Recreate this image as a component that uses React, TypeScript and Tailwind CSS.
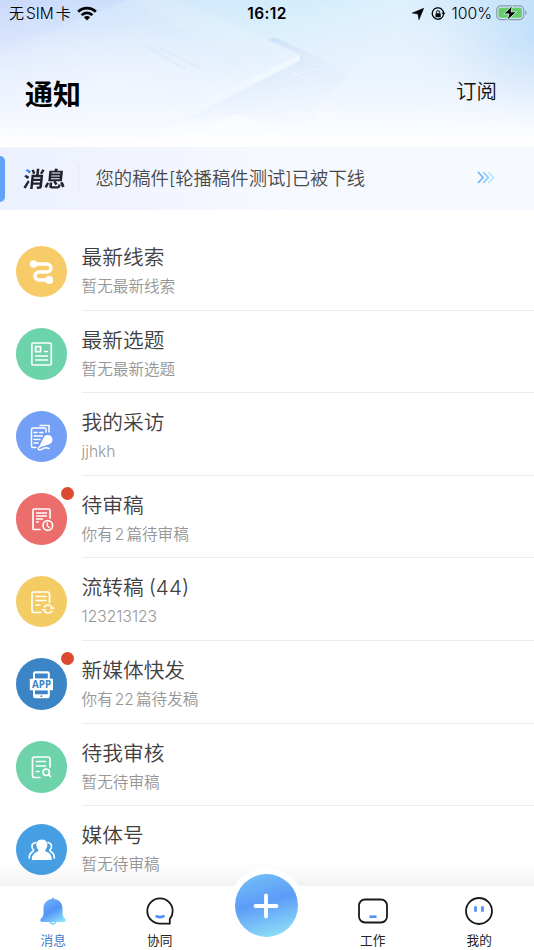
import React from 'react';

interface Item {
  id: number;
  title: React.ReactNode;
  subtitle: React.ReactNode;
  color: string;
  icon: React.ReactNode;
  unread?: boolean;
}

const stroke = {
  fill: 'none',
  stroke: 'white',
  strokeWidth: 1.7,
  strokeLinecap: 'round' as const,
  strokeLinejoin: 'round' as const,
};

const items: Item[] = [
  {
    id: 1,
    title: '最新线索',
    subtitle: '暂无最新线索',
    color: 'bg-[#f6cb68]',
    icon: (
      <>
        <path d="M18 18H31a4 4 0 0 1 0 8H23a4 4 0 0 0 0 8H33" fill="none" stroke="white" strokeWidth="3.5" />
        <circle cx="17.5" cy="18" r="3.8" fill="white" />
        <circle cx="33.2" cy="34" r="4" fill="white" />
      </>
    ),
  },
  {
    id: 2,
    title: '最新选题',
    subtitle: '暂无最新选题',
    color: 'bg-[#6dd3ab]',
    icon: (
      <g {...stroke}>
        <rect x="15.8" y="15" width="19.5" height="22" rx="1.5" />
        <rect x="19.6" y="18.7" width="5" height="5" />
        <path d="M28.500 23.500H31.500M19.800 28H31.500M19.800 32H31.500" />
      </g>
    ),
  },
  {
    id: 3,
    title: '我的采访',
    subtitle: 'jjhkh',
    color: 'bg-[#749ff7]',
    icon: (
      <g {...stroke} strokeWidth="1.500">
        <path d="M24 14.500H33V21M30 21V18.500a1.500 1.500 0 0 0-1.500-1.500H17a1.500 1.500 0 0 0-1.500 1.500V35a1.500 1.500 0 0 0 1.500 1.500H20" />
        <path d="M18 21.500H21M23.500 21.500H27M18 25H26.500M18 28.500H24M18 32H22" strokeWidth="1.300" />
        <path d="M28 27.500a4 4 0 1 1 5 5L24 35.500z" fill="white" />
        <path d="M24 35.500c-3 2-2 4 1 3 4-1.500 4-3 8-1" />
      </g>
    ),
  },
  {
    id: 4,
    title: '待审稿',
    subtitle: <>你有<span className="mx-[2px]">2</span>篇待审稿</>,
    color: 'bg-[#eb6d6c]',
    unread: true,
    icon: (
      <g {...stroke}>
        <path d="M24 36.500H18a1 1 0 0 1-1-1V17a1 1 0 0 1 1-1H33a1 1 0 0 1 1 1V25" />
        <path d="M20.500 20H30.500M20.500 23H30.500M20.500 26H26.500M20.500 29H22.500" strokeWidth="1.400" />
        <circle cx="31.800" cy="32.500" r="4.800" />
        <path d="M31.300 29.800V32.800L33.100 34.500" strokeWidth="1.300" />
      </g>
    ),
  },
  {
    id: 5,
    title: <>流转稿<span className="ml-[5px]">(44)</span></>,
    subtitle: '123213123',
    color: 'bg-[#f4cc64]',
    icon: (
      <g {...stroke}>
        <path d="M25 36.500H18a2 2 0 0 1-2-2V18a2 2 0 0 1 2-2H31.500a2 2 0 0 1 2 2V26.500" />
        <path d="M20 20.500H30M20 24.500H30M20 29H24" strokeWidth="1.300" />
        <path d="M28.200 31.200a4.500 4.500 0 0 1 8.200 1M36 34.800a4.500 4.500 0 0 1-8.200-1M35 32.300h2.800M26.500 33.600h2.800" strokeWidth="1.400" />
      </g>
    ),
  },
  {
    id: 6,
    title: '新媒体快发',
    subtitle: <>你有<span className="mx-[2px]">22</span>篇待发稿</>,
    color: 'bg-[#3b85c7]',
    unread: true,
    icon: (
      <>
        <path
          d="M17 21V15.500a2.200 2.200 0 0 1 2.200-2.200H31.600a2.200 2.200 0 0 1 2.200 2.200V21ZM19 15.600V20.500H31.800V15.600Z"
          fill="white"
          fillRule="evenodd"
        />
        <rect x="13.800" y="20.700" width="23.200" height="11.500" rx="0.500" fill="white" />
        <path
          d="M17 32V38a2.200 2.200 0 0 0 2.200 2.200H31.600a2.200 2.200 0 0 0 2.200-2.200V32ZM19 32.200H31.800V36.200H19ZM24.500 38.200a.9.9 0 1 0 1.800 0 .9.9 0 1 0-1.800 0"
          fill="white"
          fillRule="evenodd"
        />
        <text x="25.600" y="29.900" textAnchor="middle" fill="#3b85c7" fontSize="9.800" fontWeight="700" fontFamily="Open Sans, sans-serif">
          APP
        </text>
      </>
    ),
  },
  {
    id: 7,
    title: '待我审核',
    subtitle: '暂无待审稿',
    color: 'bg-[#6ed2aa]',
    icon: (
      <g {...stroke}>
        <path d="M24 36.500H18.500a2 2 0 0 1-2-2V18a2 2 0 0 1 2-2H32a2 2 0 0 1 2 2V26" />
        <path d="M20.500 20.500H29.500M20.500 25H29.500M20.500 30.500H23" />
        <circle cx="30.200" cy="31.300" r="3.200" />
        <path d="M32.800 33.800L34.500 35.500" />
      </g>
    ),
  },
  {
    id: 8,
    title: '媒体号',
    subtitle: '暂无待审稿',
    color: 'bg-[#469fe3]',
    icon: (
      <>
        <g {...stroke}>
          <path d="M19.500 18.500c-4 .5-4.500 5-2 7.500.5 1-.5 1.500-1.500 2C14 29.200 13.200 31 13.200 34" />
          <path d="M32 18.500c4 .5 4.500 5 2 7.500-.5 1 .5 1.500 1.500 2C37.500 29.200 38.300 31 38.300 34" />
        </g>
        <path
          d="M25.800 15.500c-4 0-6 3-5.500 6 .3 2 1 3.200 2 4.500.3 1-.5 1.500-1.500 2-3.500 1.500-5 3.500-5 8H35.800c0-4.500-1.500-6.500-5-8-1-.5-1.800-1-1.500-2 1-1.300 1.700-2.500 2-4.500.5-3-1.500-6-5.500-6z"
          fill="white"
        />
      </>
    ),
  },
];

function StatusBar() {
  return (
    <div className="flex h-7 items-center justify-between pr-[7px] pl-[9px] text-[16px] leading-7 text-black">
      <div className="flex w-[200px] items-center font-[350]">
        <span className="text-[15px]">无</span>
        <span className="mx-[2px] text-[15.500px]">SIM</span>
        <span className="text-[15px]">卡</span>
        <svg className="-mt-[2px] ml-[6px]" width="20" height="15" viewBox="0 0 20 15">
          <g fill="none" stroke="black" strokeWidth="2.700">
            <path d="M1.200 5.700a12.400 12.400 0 0 1 17.600 0" />
            <path d="M4.600 9.100a7.600 7.600 0 0 1 10.800 0" />
          </g>
          <path d="M10 14.500L6.900 11.300a4.400 4.400 0 0 1 6.200 0z" fill="black" />
        </svg>
      </div>
      <span className="-ml-[3px] text-[15.500px] font-semibold tracking-[0.400px]">16:12</span>
      <div className="-mr-px flex w-[200px] items-center justify-end">
        <svg width="12" height="12" viewBox="0 0 13 13">
          <path d="M12.700.300L7.500 12.700 6.500 6.500.300 5.500z" fill="black" stroke="black" strokeWidth=".6" strokeLinejoin="round" />
        </svg>
        <svg className="ml-[7px]" width="15" height="14" viewBox="0 0 15 14">
          <path d="M10.500 2A5.700 5.700 0 1 0 12.600 7.500M10.300 1.900A5.700 5.700 0 0 1 12.500 6" fill="none" stroke="black" strokeWidth="1.300" />
          <path d="M10.500 5.700h4L12.500 8.300z" />
          <rect x="4.500" y="6.300" width="5.200" height="3.900" rx=".6" />
          <path d="M5.500 6.500V5.300a1.600 1.600 0 0 1 3.200 0V6.500" fill="none" stroke="black" />
        </svg>
        <span className="mr-[4px] ml-[5px] text-[15.800px] font-[350]">100%</span>
        <svg className="-mt-[2px]" width="32" height="16" viewBox="0 0 32 16">
          <rect x=".7" y=".9" width="27" height="13.700" rx="4" fill="none" stroke="#8b9da7" strokeWidth="1.200" />
          <rect x="2.500" y="2.700" width="23.400" height="10.100" rx="2.300" fill="#65cc68" />
          <path d="M29.300 5.500c2 .8 2 3.700 0 4.500z" fill="#8b9da7" />
          <path d="M16.500.5L7.700 8.900H13L11 15.500 20.500 6.800H15z" fill="black" stroke="#d9f0ed" strokeWidth=".9" />
        </svg>
      </div>
    </div>
  );
}

function HeaderBackdrop() {
  return (
    <svg className="absolute inset-0 -z-10" width="534" height="147" viewBox="0 0 534 147">
      <defs>
        <linearGradient id="sky" x1="0" y1="0" x2="1" y2="0">
          <stop offset="0" stopColor="#cddefc" />
          <stop offset=".25" stopColor="#d2e6fc" />
          <stop offset=".5" stopColor="#d1ecfb" />
          <stop offset=".75" stopColor="#dcf0fd" />
          <stop offset="1" stopColor="#c8e2fa" />
        </linearGradient>
        <linearGradient id="fade" x1="0" y1="0" x2="0" y2="1">
          <stop offset="0" stopColor="#f6f8fe" stopOpacity="0" />
          <stop offset=".55" stopColor="#f1f5fe" stopOpacity=".75" />
          <stop offset=".8" stopColor="#f8faff" stopOpacity=".92" />
          <stop offset="1" stopColor="white" />
        </linearGradient>
        <linearGradient id="beam" gradientUnits="userSpaceOnUse" x1="165" y1="125" x2="300" y2="58">
          <stop offset="0" stopColor="white" stopOpacity="0" />
          <stop offset="1" stopColor="white" stopOpacity=".5" />
        </linearGradient>
        <linearGradient id="shade" gradientUnits="userSpaceOnUse" x1="270" y1="40" x2="350" y2="72">
          <stop offset="0" stopColor="#c6dcf8" stopOpacity=".7" />
          <stop offset="1" stopColor="#dce7fb" stopOpacity="0" />
        </linearGradient>
        <linearGradient id="under" gradientUnits="userSpaceOnUse" x1="270" y1="65" x2="282" y2="118">
          <stop offset="0" stopColor="#d5e4fa" stopOpacity=".55" />
          <stop offset="1" stopColor="#e6eefc" stopOpacity="0" />
        </linearGradient>
        <radialGradient id="glow">
          <stop offset="0" stopColor="#b8dbfa" stopOpacity=".65" />
          <stop offset="1" stopColor="#c9e3fb" stopOpacity="0" />
        </radialGradient>
        <radialGradient id="haze">
          <stop offset="0" stopColor="#f4f7ff" stopOpacity=".6" />
          <stop offset="1" stopColor="#f4f7ff" stopOpacity="0" />
        </radialGradient>
      </defs>
      <rect width="534" height="147" fill="url(#sky)" />
      <path d="M0 52L128 0H0z" fill="#bfd1fa" opacity=".3" />
      <rect width="534" height="147" fill="url(#fade)" />
      <ellipse cx="110" cy="85" rx="150" ry="60" fill="url(#haze)" />
      <ellipse cx="534" cy="35" rx="95" ry="85" fill="url(#glow)" />
      <path d="M268 40L274 37 350 71 298 62 300 55z" fill="url(#shade)" />
      <path d="M298 62L183 121 240 113 300 128 350 71z" fill="url(#under)" />
      <path d="M180 0L300 53.500V56L245 82 163 121 155 119 245 64 130 0z" fill="white" opacity=".12" />
      <path d="M300 55V60L267 77 175 122 163 122 243 82z" fill="url(#beam)" />
      <path d="M180 138L240 113 285 138z" fill="white" opacity=".4" />
      <path d="M315 124L321 100Q329 94 335 102L345 118z" fill="white" opacity=".2" />
      <path d="M145 45L185 69M158 47L200 68" stroke="#cfe0fa" strokeOpacity=".3" strokeWidth="3" />
      <path d="M284 68L325 88M281 92c0-14 22-24 50-24M315 80c5-8 20-9 35-8" stroke="white" strokeOpacity=".35" fill="none" />
    </svg>
  );
}

function Header() {
  return (
    <header className="relative isolate h-[147px]">
      <HeaderBackdrop />
      <StatusBar />
      <div className="flex items-center justify-between pt-[45px] pr-[37px] pl-[25px]">
        <h1 className="text-[28px] leading-[44px] font-bold text-black">通知</h1>
        <button className="-mt-[6px] text-[20.500px] leading-[38px] font-[350] text-[#111]">订阅</button>
      </div>
    </header>
  );
}

function NoticeBar() {
  return (
    <section className="flex h-[63px] items-center bg-linear-to-r from-[#edf1fe] to-[#f6f9fe] to-55%">
      <div className="h-[46px] w-[5px] rounded-r-[5px] bg-[#61a3f9]" />
      <div className="ml-[18px] -skew-x-6 bg-[linear-gradient(135deg,#3e8bfa_20%,#202329_21%)] bg-clip-text text-[21.500px] leading-8 font-bold text-transparent">
        消息
      </div>
      <div className="ml-3 h-8 w-px bg-[#e8e9ef]" />
      <p className="mt-px ml-[16.500px] text-[18.350px] font-[350] text-[#484848]">您的稿件[轮播稿件测试]已被下线</p>
      <svg className="-mt-[2px] mr-[39px] ml-auto" width="18" height="13" viewBox="0 0 18 13" fill="none" strokeWidth="1.800">
        <path d="M1 1L6 6.500 1 12" stroke="#76b4fa" />
        <path d="M6.200 1L11.200 6.500 6.200 12" stroke="#90cefb" />
        <path d="M11.400 1L16.400 6.500 11.400 12" stroke="#b5e7fd" />
      </svg>
    </section>
  );
}

function MessageRow({ item }: { item: Item }) {
  return (
    <li className="flex h-[82.600px] pl-[15.500px]">
      <div className={`relative mt-[17.500px] size-[51.500px] shrink-0 rounded-full ${item.color}`}>
        <svg width="51.500" height="51.500" viewBox="0 0 51.500 51.500">
          {item.icon}
        </svg>
        {item.unread && <span className="absolute -top-[6.500px] -right-[6.500px] size-[13px] rounded-full bg-[#da4930]" />}
      </div>
      <div className="ml-[14.600px] flex-1 border-b border-[#ececec] pt-[15px]">
        <h2 className="text-[20.700px] leading-[30px] font-[350] text-[#404040]">{item.title}</h2>
        <p className="mt-[2px] text-[15.600px] leading-6 font-[350] text-[#969696]">{item.subtitle}</p>
      </div>
    </li>
  );
}

function TabBar() {
  return (
    <nav className="absolute inset-x-0 bottom-0 h-[64px] bg-white">
      <div className="absolute inset-x-0 -top-6 -z-10 h-6 bg-linear-to-b from-transparent to-black/5" />
      <div className="absolute -top-[18px] left-[229px] size-[75px] rounded-full bg-white" />
      <div className="relative grid h-full grid-cols-5 pr-[1.500px] text-center text-[12.700px] leading-[18px] text-[#222]">
        <div className="flex flex-col items-center pt-[10px] text-[#467acb]">
          <svg width="28" height="30" viewBox="0 0 28 30">
            <defs>
              <linearGradient id="bell" x1=".25" y1=".2" x2=".65" y2="1">
                <stop offset="0" stopColor="#67a8fa" />
                <stop offset=".4" stopColor="#5494f7" />
                <stop offset="1" stopColor="#8ee2fb" />
              </linearGradient>
            </defs>
            <path
              d="M14 1.500c.8 0 1 .8 1 1.600 5 .5 8.500 4.300 8.500 9.400v5c0 2.800 1.300 4 2.600 5.300 1.200 1.200.8 3.200-1.100 3.200H17.500a3.600 3.600 0 0 1-7 0H3c-1.900 0-2.300-2-1.100-3.200 1.300-1.300 2.600-2.500 2.600-5.300v-5c0-5.100 3.500-8.900 8.500-9.400 0-.8.200-1.600 1-1.600z"
              fill="url(#bell)"
            />
            <path d="M12.300 26h3.400a1.800 1.800 0 0 1-3.400 0z" fill="white" />
          </svg>
          <span className="mt-[5.500px]">消息</span>
        </div>
        <div className="flex flex-col items-center pt-[10px]">
          <svg width="30" height="30" viewBox="0 0 30 30" fill="none">
            <path d="M15 27.700A12.700 12.700 0 1 1 27.700 15c0 3-1 5.700-2.900 7.900V27.700z" stroke="#191919" strokeWidth="1.800" strokeLinejoin="round" />
            <path d="M11.500 20.300c2 .9 5 .9 7 0" stroke="#4f91f7" strokeWidth="2.600" strokeLinecap="round" />
          </svg>
          <span className="mt-[5.500px]">协同</span>
        </div>
        <button className="mt-[-12px] size-[63px] justify-self-center rounded-full bg-[linear-gradient(165deg,#72bff7_5%,#5c9cf8_45%,#91e1f8_95%)]">
          <svg className="mx-auto" width="26" height="26" viewBox="0 0 26 26">
            <path d="M13 2.500V23.500M2.500 13H23.500" stroke="white" strokeWidth="3.800" strokeLinecap="round" />
          </svg>
        </button>
        <div className="flex flex-col items-center pt-[10px]">
          <svg width="32" height="30" viewBox="0 0 32 30" fill="none">
            <rect x="2" y="3.500" width="28" height="23" rx="6" stroke="#191919" strokeWidth="1.800" />
            <path d="M12.500 20.700H19.500" stroke="#4f91f7" strokeWidth="2.600" />
          </svg>
          <span className="mt-[5.500px]">工作</span>
        </div>
        <div className="flex flex-col items-center pt-[10px]">
          <svg width="30" height="30" viewBox="0 0 30 30" fill="none">
            <circle cx="15" cy="15" r="13" stroke="#191919" strokeWidth="1.800" />
            <path d="M11.500 10.200V15.800M18.500 10.200V15.800" stroke="#4f91f7" strokeWidth="2.700" />
          </svg>
          <span className="mt-[5.500px]">我的</span>
        </div>
      </div>
    </nav>
  );
}

export default function App() {
  return (
    <div className="relative isolate h-[950px] w-[534px] overflow-hidden bg-white font-[Inter,'Noto_Sans_CJK_SC',sans-serif]">
      <Header />
      <NoticeBar />
      <ul className="relative -z-20 pt-[18px]">
        {items.map((item) => (
          <MessageRow key={item.id} item={item} />
        ))}
      </ul>
      <TabBar />
    </div>
  );
}
